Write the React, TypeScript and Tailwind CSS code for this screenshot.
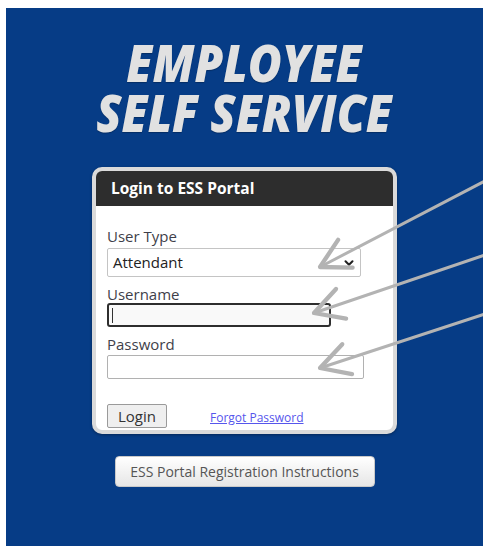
import { ChevronDown } from "lucide-react";

const uiFont = { fontFamily: '"Open Sans", "Noto Sans", sans-serif' };

function Pointers() {
  return (
    <svg className="absolute inset-0 pointer-events-none" width={483} height={546} viewBox="0 0 483 546">
      <defs>
        <marker id="tip" markerUnits="userSpaceOnUse" markerWidth="40" markerHeight="40" refX="0" refY="0" viewBox="-24 -14 28 28" orient="auto">
          <path d="M-20,-11 L0,0 L-20,11" fill="none" stroke="#b3b3b3" strokeWidth="3" strokeLinecap="round" strokeLinejoin="round" />
        </marker>
      </defs>
      <g stroke="#b3b3b3" strokeWidth="3" strokeLinecap="round">
        <line x1="485" y1="181" x2="320" y2="267" markerEnd="url(#tip)" />
        <line x1="485" y1="255" x2="314" y2="313" markerEnd="url(#tip)" />
        <line x1="485" y1="314" x2="320" y2="368" markerEnd="url(#tip)" />
      </g>
    </svg>
  );
}

export default function App() {
  return (
    <div className="relative w-[483px] h-[546px] bg-white pt-[8px] pl-[6px] overflow-hidden" style={uiFont}>
      <div className="h-full bg-[#063c86] flex flex-col items-center">
        {/* Heading, squeezed horizontally for the narrow poster look */}
        <h1
          className="mt-[29px] text-center text-[52px] font-extrabold italic text-[#e1e1e1] scale-x-[0.89]"
          style={{ textShadow: "0 1px 1px rgba(0,0,0,0.25)" }}
        >
          <span className="block leading-[50px]">EMPLOYEE</span>
          <span className="block leading-[50px]">SELF SERVICE</span>
        </h1>

        {/* Login card */}
        <div className="mt-[30px] w-[305px] rounded-[10px] border-[4px] border-[#dadada] bg-white shadow-[0_1px_3px_rgba(0,0,0,0.35)] overflow-hidden">
          <div className="h-[35px] bg-[#2d2d2d] flex items-center pl-[15px]">
            <span className="text-[15.5px] font-bold text-white">Login to ESS Portal</span>
          </div>
          <div className="px-[11px] pt-[21px] pb-[2px]">
            <label className="block text-[15px] leading-[18px] text-[#3f3f4a]">User Type</label>
            <div className="mt-[3px] w-[254px] h-[29px] border border-[#c4c4c4] rounded-[2px] flex items-center justify-between pl-[5px] pr-[4px]">
              <span className="text-[15px] text-[#222]">Attendant</span>
              <ChevronDown size={14} strokeWidth={3.5} className="text-[#222]" />
            </div>

            <label className="block mt-[8px] text-[15px] leading-[18px] text-[#3f3f4a]">Username</label>
            <div className="mt-0 w-[224px] h-[24px] border-2 border-[#2e2e2e] rounded-[3px] bg-[#f9f9f9] flex items-center pl-[3px]">
              <span className="w-px h-[15px] bg-[#333]" />
            </div>

            <label className="block mt-[8px] text-[15px] leading-[18px] text-[#3f3f4a]">Password</label>
            <div className="mt-[2px] w-[257px] h-[24px] border border-[#b1b1b1] rounded-[2px] bg-white" />

            <div className="mt-[25px] flex items-center">
              <button className="w-[60px] h-[24px] border-[1.5px] border-[#9a9a9a] rounded-[2px] bg-[#efefef] text-[15px] leading-none text-[#333]">
                Login
              </button>
              <a className="ml-[43px] mt-[3px] text-[12px] text-[#5656ec] underline">Forgot Password</a>
            </div>
          </div>
        </div>

        {/* Registration help */}
        <button className="mt-[22px] w-[260px] h-[31px] rounded-[4px] border border-[#c9c9c9] bg-gradient-to-b from-white to-[#e6e6e6] text-[14px] text-[#555]">
          ESS Portal Registration Instructions
        </button>
      </div>
      <Pointers />
    </div>
  );
}
